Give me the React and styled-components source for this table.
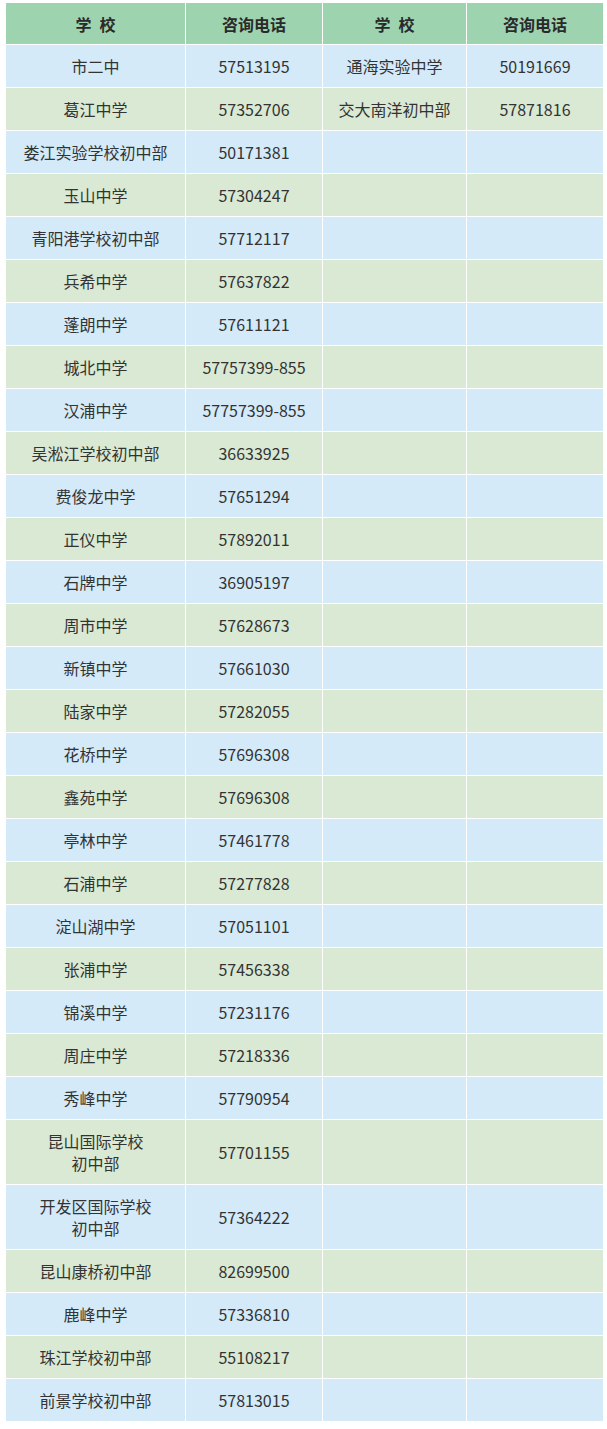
import React from "react";
import styled, { createGlobalStyle } from "styled-components";

const Global = createGlobalStyle`
  html, body { margin: 0; padding: 0; background: #ffffff; }
  body { font-family: "Noto Sans CJK SC", "Noto Sans", sans-serif; }
`;

const Page = styled.div`
  padding: 3px 4px 6px 5px;
`;

const Table = styled.table`
  width: 598px;
  border-collapse: collapse;
  table-layout: fixed;
`;

const Head = styled.th`
  background: #9ed3b0;
  color: #2a2a2a;
  font-weight: 700;
  font-size: 16px;
  height: 41px;
  padding: 0;
  border: 1px solid #ffffff;
  border-top: none;
  text-align: center;
  letter-spacing: ${(p) => (p.$spaced ? "8px" : "0")};
  text-indent: ${(p) => (p.$spaced ? "8px" : "0")};
`;

const Row = styled.tr`
  background: ${(p) => (p.$alt ? "#dae9d3" : "#d4eaf9")};
  height: ${(p) => (p.$tall ? "65px" : "43px")};
`;

const Cell = styled.td`
  border: 1px solid #ffffff;
  padding: 0 4px;
  text-align: center;
  color: #333333;
  font-size: 16px;
  line-height: 22px;
`;

const left = [
  ["市二中", "57513195"],
  ["葛江中学", "57352706"],
  ["娄江实验学校初中部", "50171381"],
  ["玉山中学", "57304247"],
  ["青阳港学校初中部", "57712117"],
  ["兵希中学", "57637822"],
  ["蓬朗中学", "57611121"],
  ["城北中学", "57757399-855"],
  ["汉浦中学", "57757399-855"],
  ["吴淞江学校初中部", "36633925"],
  ["费俊龙中学", "57651294"],
  ["正仪中学", "57892011"],
  ["石牌中学", "36905197"],
  ["周市中学", "57628673"],
  ["新镇中学", "57661030"],
  ["陆家中学", "57282055"],
  ["花桥中学", "57696308"],
  ["鑫苑中学", "57696308"],
  ["亭林中学", "57461778"],
  ["石浦中学", "57277828"],
  ["淀山湖中学", "57051101"],
  ["张浦中学", "57456338"],
  ["锦溪中学", "57231176"],
  ["周庄中学", "57218336"],
  ["秀峰中学", "57790954"],
  [["昆山国际学校", "初中部"], "57701155"],
  [["开发区国际学校", "初中部"], "57364222"],
  ["昆山康桥初中部", "82699500"],
  ["鹿峰中学", "57336810"],
  ["珠江学校初中部", "55108217"],
  ["前景学校初中部", "57813015"],
];

const right = [
  ["通海实验中学", "50191669"],
  ["交大南洋初中部", "57871816"],
];

export default function App() {
  return (
    <Page>
      <Global />
      <Table>
        <colgroup>
          <col style={{ width: 180 }} />
          <col style={{ width: 137 }} />
          <col style={{ width: 144 }} />
          <col style={{ width: 137 }} />
        </colgroup>
        <thead>
          <tr>
            <Head $spaced>学校</Head>
            <Head>咨询电话</Head>
            <Head $spaced>学校</Head>
            <Head>咨询电话</Head>
          </tr>
        </thead>
        <tbody>
          {left.map(([name, tel], i) => {
            const tall = Array.isArray(name);
            const r = right[i];
            return (
              <Row key={i} $alt={i % 2 === 1} $tall={tall}>
                <Cell>
                  {tall ? (
                    <>
                      {name[0]}
                      <br />
                      {name[1]}
                    </>
                  ) : (
                    name
                  )}
                </Cell>
                <Cell>{tel}</Cell>
                <Cell>{r ? r[0] : ""}</Cell>
                <Cell>{r ? r[1] : ""}</Cell>
              </Row>
            );
          })}
        </tbody>
      </Table>
    </Page>
  );
}
